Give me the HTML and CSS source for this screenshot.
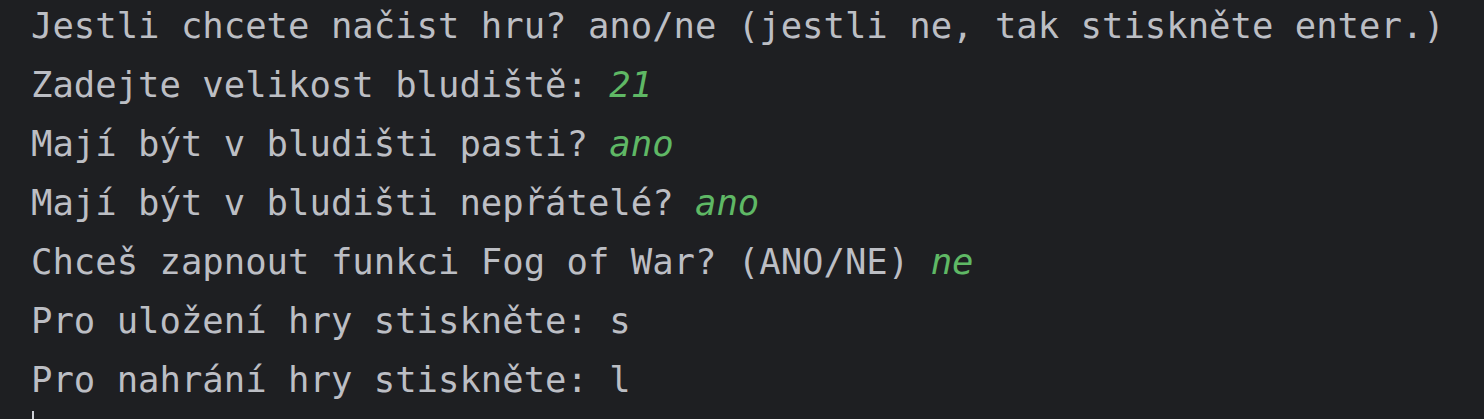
FILE: index.html
```html
<!DOCTYPE html>
<html lang="cs">
<head>
<meta charset="utf-8">
<title>Console</title>
<link rel="stylesheet" href="styles.css">
</head>
<body>
<div class="console">
<div class="line">Jestli chcete načist hru? ano/ne (jestli ne, tak stiskněte enter.)</div>
<div class="line">Zadejte velikost bludiště: <span class="input">21</span></div>
<div class="line">Mají být v bludišti pasti? <span class="input">ano</span></div>
<div class="line">Mají být v bludišti nepřátelé? <span class="input">ano</span></div>
<div class="line">Chceš zapnout funkci Fog of War? (ANO/NE) <span class="input">ne</span></div>
<div class="line">Pro uložení hry stiskněte: s</div>
<div class="line">Pro nahrání hry stiskněte: l</div>
<div class="line"><span class="caret"></span></div>
</div>
</body>
</html>
```
FILE: styles.css
```css
html, body {
  margin: 0;
  padding: 0;
  background: #1e1f22;
  height: 100%;
  overflow: hidden;
}
.console {
  margin-top: -4px;
  padding-left: 31px;
  font-family: "DejaVu Sans Mono", "Liberation Mono", monospace;
  font-size: 35.6px;
  line-height: 59px;
  color: #bcbec4;
}
.line {
  height: 59px;
  white-space: pre;
}
.input {
  color: #5fb865;
  font-style: italic;
}
.caret {
  display: inline-block;
  width: 2px;
  height: 40px;
  background: #ced0d6;
  vertical-align: top;
  margin-top: 2px;
  margin-left: 1px;
}
```
